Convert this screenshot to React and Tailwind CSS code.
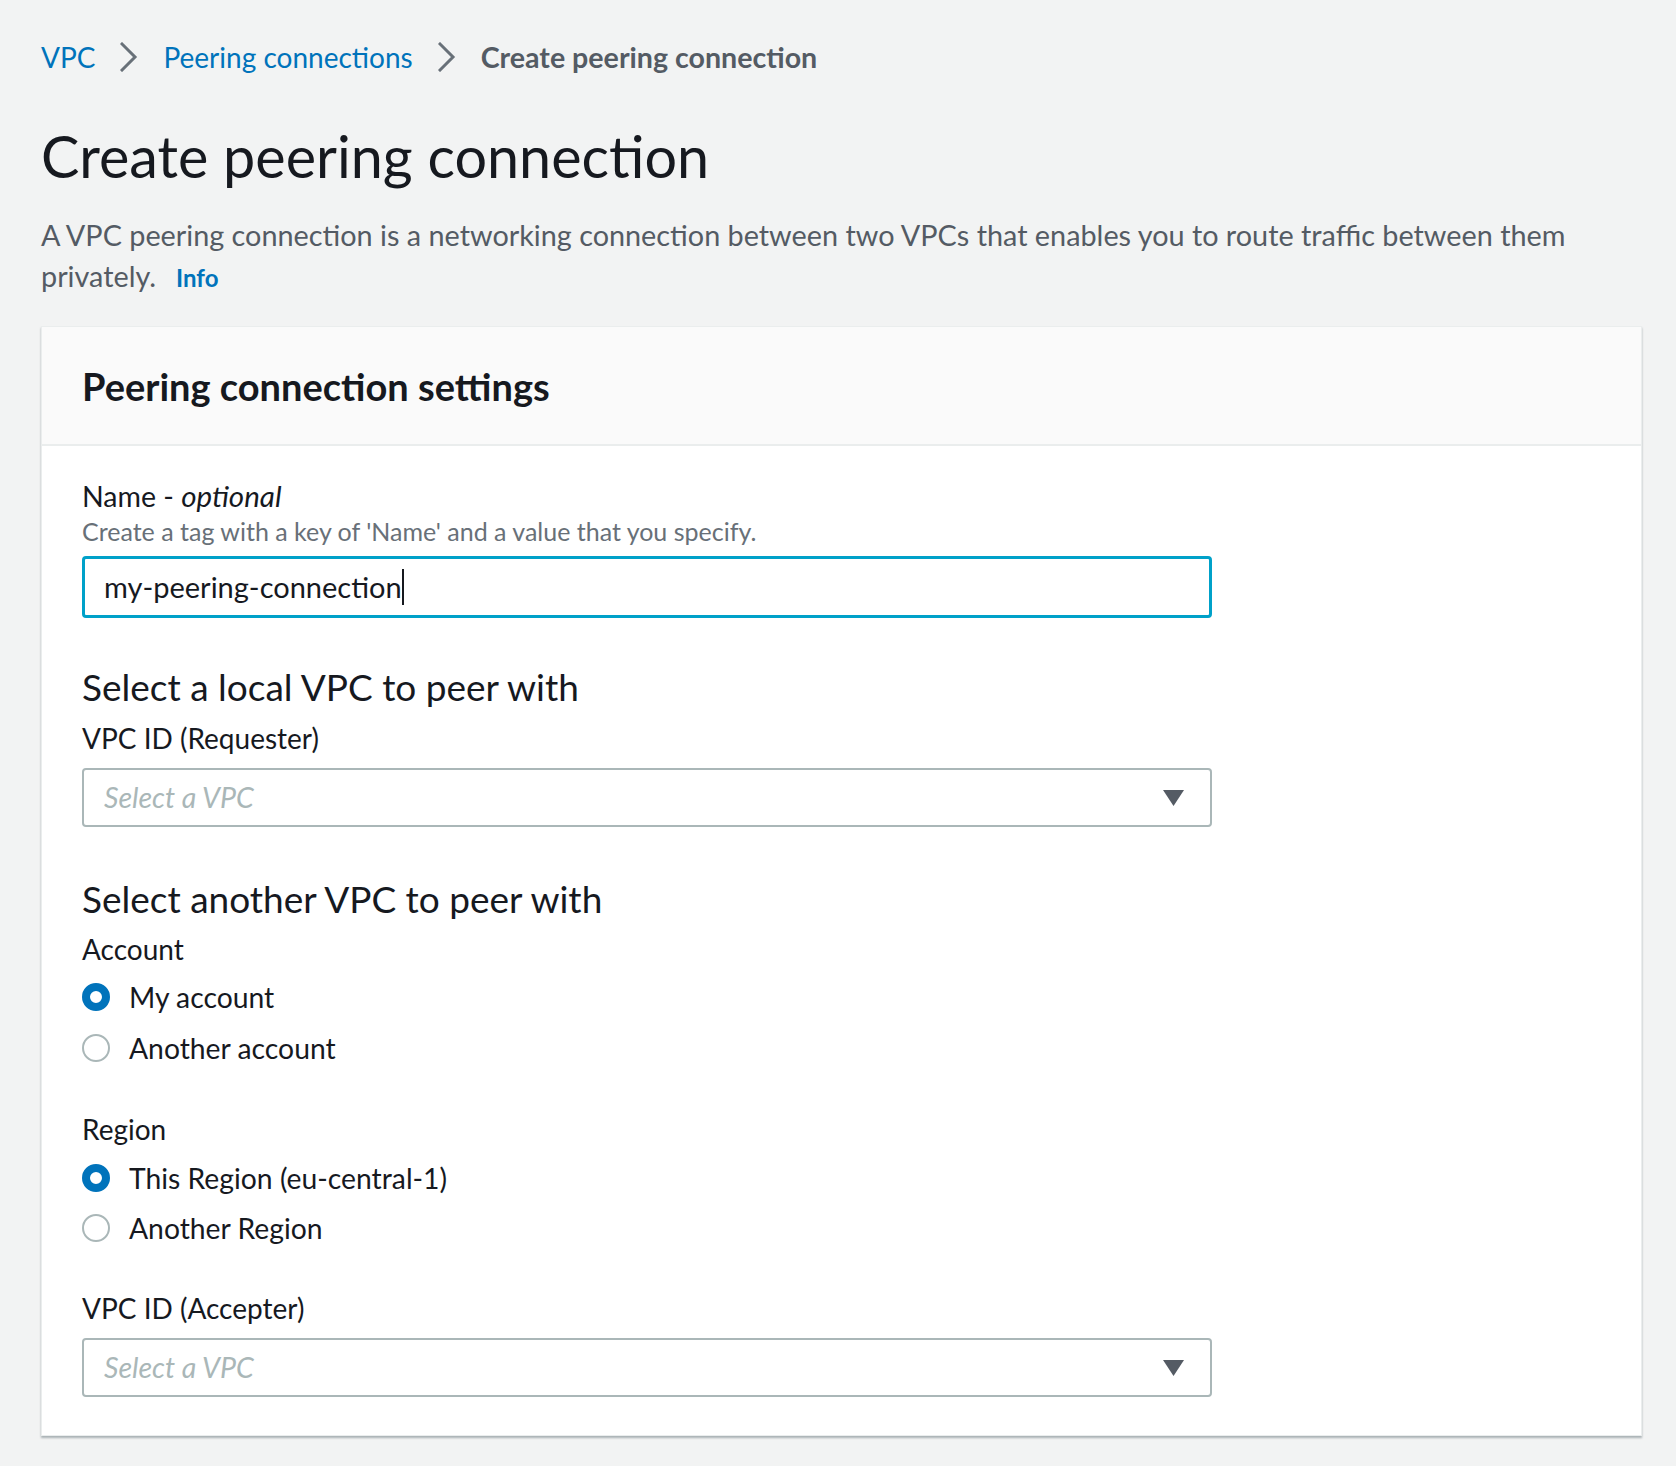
import React from 'react';

const font = { fontFamily: 'Lato, "Liberation Sans", sans-serif' };

const Chevron = () => (
  <svg className="w-[18px] h-[30px] mx-[25px] shrink-0" viewBox="0 0 18 30" fill="none">
    <path d="M2 2l13 13L2 28" stroke="#687078" strokeWidth="3" strokeLinecap="square" />
  </svg>
);

const Radio = ({ checked, label }) => (
  <div className="flex items-center h-[40px]">
    {checked ? (
      <span className="w-[28px] h-[28px] rounded-full border-[8px] border-[#0073bb] bg-white shrink-0" />
    ) : (
      <span className="w-[28px] h-[28px] rounded-full border-2 border-[#aab7b8] bg-white shrink-0" />
    )}
    <span className="ml-[19px] text-[28.3px] leading-[40px] text-[#16191f]">{label}</span>
  </div>
);

const SelectBox = () => (
  <div className="w-[1130px] h-[59px] border-2 border-[#aab7b8] rounded-[4px] bg-white flex items-center justify-between pl-[20px] pr-[26px]">
    <span className="italic text-[28.5px] text-[#aab7b8]">Select a VPC</span>
    <svg className="w-[21px] h-[16px]" viewBox="0 0 21 16">
      <path d="M0 0h21L10.5 16z" fill="#545b64" />
    </svg>
  </div>
);

const App = () => {
  return (
    <div className="min-h-screen bg-[#f2f3f3] pl-[41px] pr-[34px] pt-[37px]" style={font}>
      {/* Breadcrumbs */}
      <nav className="flex items-center h-[40px] text-[28px] leading-[40px]">
        <a className="text-[#0073bb]">VPC</a>
        <Chevron />
        <a className="text-[#0073bb]">Peering connections</a>
        <Chevron />
        <span className="text-[#545b64] font-bold text-[28.6px]">Create peering connection</span>
      </nav>

      {/* Header */}
      <h1 className="mt-[47px] text-[57.5px] leading-[64px] text-[#16191f]">Create peering connection</h1>
      <p className="mt-[27px] text-[28.8px] leading-[41px] text-[#545b64]">
        A VPC peering connection is a networking connection between two VPCs that enables you to route traffic between them
        <br />
        privately.
        <a className="ml-[20px] text-[24px] font-bold text-[#0073bb]">Info</a>
      </p>

      {/* Panel */}
      <div className="mt-[28px] bg-white border border-[#eaeded] shadow-[0_2px_2px_0_rgba(0,28,36,0.3)]">
        <div className="h-[119px] flex items-center px-[40px] bg-[#fafafa] border-b-2 border-[#eaeded]">
          <h2 className="text-[38px] leading-[44px] font-bold text-[#16191f]">Peering connection settings</h2>
        </div>

        <div className="pl-[40px] pt-[30px] pb-[38px]">
          {/* Name */}
          <label className="block text-[28.5px] leading-[40px] text-[#16191f]">
            Name - <i className="text-[29.5px]">optional</i>
          </label>
          <p className="text-[25px] leading-[30px] text-[#687078]">
            Create a tag with a key of 'Name' and a value that you specify.
          </p>
          <div className="mt-[10px] w-[1130px] h-[62px] border-[3px] border-[#00a1c9] rounded-[4px] bg-white flex items-center pl-[19px]">
            <span className="text-[29px] text-[#16191f]">my-peering-connection</span>
            <span className="w-[2px] h-[36px] bg-[#16191f]" />
          </div>

          {/* Local VPC */}
          <h3 className="mt-[47px] text-[37px] leading-[44px] text-[#16191f]">Select a local VPC to peer with</h3>
          <label className="block mt-[9px] text-[28px] leading-[40px] text-[#16191f]">VPC ID (Requester)</label>
          <div className="mt-[10px]">
            <SelectBox />
          </div>

          {/* Another VPC */}
          <h3 className="mt-[50px] text-[37px] leading-[44px] text-[#16191f]">Select another VPC to peer with</h3>
          <label className="block mt-[8px] text-[28px] leading-[40px] text-[#16191f]">Account</label>
          <div className="mt-[8px] flex flex-col gap-[11px]">
            <Radio checked label="My account" />
            <Radio label="Another account" />
          </div>

          <label className="block mt-[41px] text-[28px] leading-[40px] text-[#16191f]">Region</label>
          <div className="mt-[9px] flex flex-col gap-[10px]">
            <Radio checked label="This Region (eu-central-1)" />
            <Radio label="Another Region" />
          </div>

          <label className="block mt-[40px] text-[28px] leading-[40px] text-[#16191f]">VPC ID (Accepter)</label>
          <div className="mt-[10px]">
            <SelectBox />
          </div>
        </div>
      </div>
    </div>
  );
};

export default App;
